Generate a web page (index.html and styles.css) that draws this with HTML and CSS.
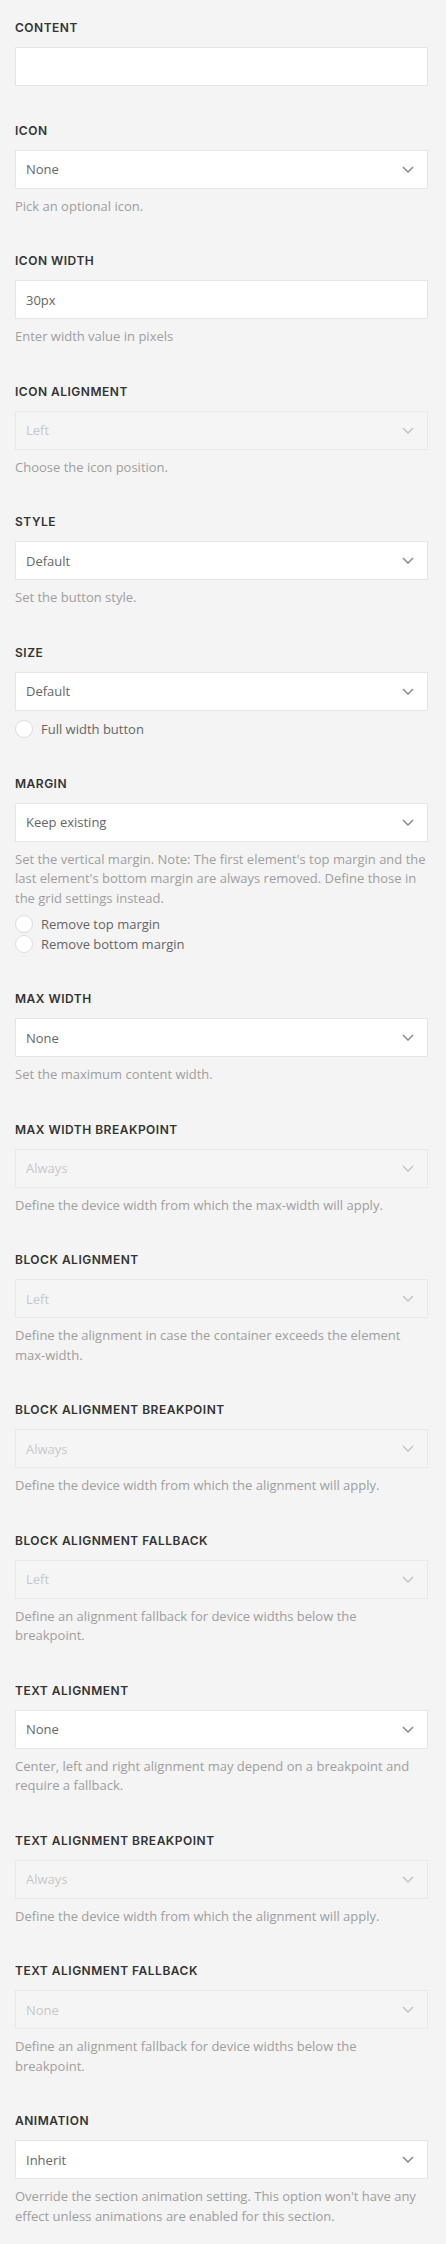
FILE: index.html
```html
<!DOCTYPE html>
<html lang="en">
<head>
<meta charset="utf-8">
<title>Button settings</title>
<link rel="stylesheet" href="styles.css">
</head>
<body>
<div class="panel">

  <div class="field">
    <div class="label">Content</div>
    <div class="control"></div>
  </div>

  <div class="field">
    <div class="label">Icon</div>
    <div class="control select"><span>None</span><svg class="chev" viewBox="0 0 12 7" width="12" height="7"><polyline points="1,1 6,6 11,1"/></svg></div>
    <p class="help">Pick an optional icon.</p>
  </div>

  <div class="field">
    <div class="label">Icon Width</div>
    <div class="control"><span>30px</span></div>
    <p class="help">Enter width value in pixels</p>
  </div>

  <div class="field">
    <div class="label">Icon Alignment</div>
    <div class="control select disabled"><span>Left</span><svg class="chev" viewBox="0 0 12 7" width="12" height="7"><polyline points="1,1 6,6 11,1"/></svg></div>
    <p class="help">Choose the icon position.</p>
  </div>

  <div class="field">
    <div class="label">Style</div>
    <div class="control select"><span>Default</span><svg class="chev" viewBox="0 0 12 7" width="12" height="7"><polyline points="1,1 6,6 11,1"/></svg></div>
    <p class="help">Set the button style.</p>
  </div>

  <div class="field">
    <div class="label">Size</div>
    <div class="control select"><span>Default</span><svg class="chev" viewBox="0 0 12 7" width="12" height="7"><polyline points="1,1 6,6 11,1"/></svg></div>
    <div class="checks">
      <label class="check"><span class="radio"></span>Full width button</label>
    </div>
  </div>

  <div class="field">
    <div class="label">Margin</div>
    <div class="control select"><span>Keep existing</span><svg class="chev" viewBox="0 0 12 7" width="12" height="7"><polyline points="1,1 6,6 11,1"/></svg></div>
    <p class="help">Set the vertical margin. Note: The first element's top margin and the last element's bottom margin are always removed. Define those in the grid settings instead.</p>
    <div class="checks tight">
      <label class="check"><span class="radio"></span>Remove top margin</label>
      <label class="check"><span class="radio"></span>Remove bottom margin</label>
    </div>
  </div>

  <div class="field">
    <div class="label">Max Width</div>
    <div class="control select"><span>None</span><svg class="chev" viewBox="0 0 12 7" width="12" height="7"><polyline points="1,1 6,6 11,1"/></svg></div>
    <p class="help">Set the maximum content width.</p>
  </div>

  <div class="field">
    <div class="label">Max Width Breakpoint</div>
    <div class="control select disabled"><span>Always</span><svg class="chev" viewBox="0 0 12 7" width="12" height="7"><polyline points="1,1 6,6 11,1"/></svg></div>
    <p class="help">Define the device width from which the max-width will apply.</p>
  </div>

  <div class="field">
    <div class="label">Block Alignment</div>
    <div class="control select disabled"><span>Left</span><svg class="chev" viewBox="0 0 12 7" width="12" height="7"><polyline points="1,1 6,6 11,1"/></svg></div>
    <p class="help">Define the alignment in case the container exceeds the element max-width.</p>
  </div>

  <div class="field">
    <div class="label">Block Alignment Breakpoint</div>
    <div class="control select disabled"><span>Always</span><svg class="chev" viewBox="0 0 12 7" width="12" height="7"><polyline points="1,1 6,6 11,1"/></svg></div>
    <p class="help">Define the device width from which the alignment will apply.</p>
  </div>

  <div class="field">
    <div class="label">Block Alignment Fallback</div>
    <div class="control select disabled"><span>Left</span><svg class="chev" viewBox="0 0 12 7" width="12" height="7"><polyline points="1,1 6,6 11,1"/></svg></div>
    <p class="help">Define an alignment fallback for device widths below the breakpoint.</p>
  </div>

  <div class="field">
    <div class="label">Text Alignment</div>
    <div class="control select"><span>None</span><svg class="chev" viewBox="0 0 12 7" width="12" height="7"><polyline points="1,1 6,6 11,1"/></svg></div>
    <p class="help">Center, left and right alignment may depend on a breakpoint and require a fallback.</p>
  </div>

  <div class="field">
    <div class="label">Text Alignment Breakpoint</div>
    <div class="control select disabled"><span>Always</span><svg class="chev" viewBox="0 0 12 7" width="12" height="7"><polyline points="1,1 6,6 11,1"/></svg></div>
    <p class="help">Define the device width from which the alignment will apply.</p>
  </div>

  <div class="field">
    <div class="label">Text Alignment Fallback</div>
    <div class="control select disabled"><span>None</span><svg class="chev" viewBox="0 0 12 7" width="12" height="7"><polyline points="1,1 6,6 11,1"/></svg></div>
    <p class="help">Define an alignment fallback for device widths below the breakpoint.</p>
  </div>

  <div class="field">
    <div class="label">Animation</div>
    <div class="control select"><span>Inherit</span><svg class="chev" viewBox="0 0 12 7" width="12" height="7"><polyline points="1,1 6,6 11,1"/></svg></div>
    <p class="help">Override the section animation setting. This option won't have any effect unless animations are enabled for this section.</p>
  </div>

</div>
</body>
</html>
```
FILE: styles.css
```css
html, body {
  margin: 0;
  padding: 0;
  background: #f4f4f4;
}

.panel {
  padding: 19.5px 18px 17px 15px;
  display: flex;
  flex-direction: column;
  gap: 37px;
  font-family: "Open Sans", "Liberation Sans", sans-serif;
}

.field {
  display: flex;
  flex-direction: column;
}

.label {
  font-family: Inter, "Liberation Sans", sans-serif;
  font-weight: 600;
  font-size: 12px;
  line-height: 15px;
  text-transform: uppercase;
  color: #333;
  margin-bottom: 12px;
  letter-spacing: 0.5px;
}

.control {
  box-sizing: border-box;
  height: 39px;
  background: #fff;
  border: 1px solid #e5e5e5;
  display: flex;
  align-items: center;
  justify-content: space-between;
  padding: 0 13px 0 10px;
  font-size: 13px;
  color: #666;
}

.control.disabled {
  background: #f5f5f5;
  border-color: #e9e9e9;
  color: #c8c8c8;
}

.chev {
  display: block;
  fill: none;
  stroke: #8a8a8a;
  stroke-width: 1.5;
}

.disabled .chev {
  stroke: #c4c4c4;
}

.help {
  margin: 8px 0 0;
  font-size: 13px;
  line-height: 19.5px;
  color: #9e9e9e;
}

.checks {
  margin-top: 8px;
  display: flex;
  flex-direction: column;
}

.checks.tight {
  margin-top: 6px;
}

.check {
  display: flex;
  align-items: center;
  gap: 8px;
  height: 20px;
  font-size: 13px;
  color: #666;
}

.radio {
  box-sizing: border-box;
  width: 18px;
  height: 18px;
  border-radius: 50%;
  background: #fff;
  border: 1px solid #dcdcdc;
}
```
